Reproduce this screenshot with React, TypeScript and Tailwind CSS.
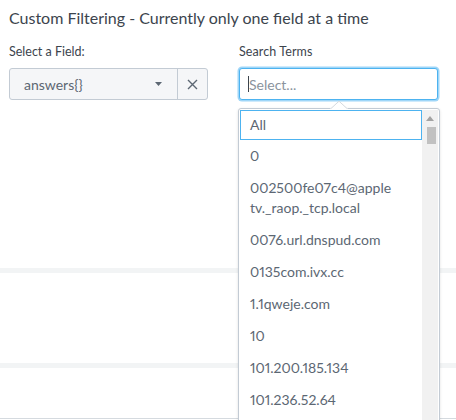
import React from "react";

const items: React.ReactNode[] = [
  "0",
  <>
    002500fe07c4@apple
    <br />
    tv._raop._tcp.local
  </>,
  "0076.url.dnspud.com",
  "0135com.ivx.cc",
  "1.1qweje.com",
  "10",
  "101.200.185.134",
  "101.236.52.64",
];

export default function App() {
  return (
    <div className="relative w-[456px] h-[420px] overflow-hidden bg-white font-['Lato',sans-serif] text-[#3c444d] proportional-nums">
      <div className="pt-[8px] pl-[9px] text-[16px] leading-[20px]">
        Custom Filtering - Currently only one field at a time
      </div>
      <div className="flex gap-[31px] pl-[9px] pt-[14px]">
        <div className="w-[199px]">
          <div className="text-[12.5px] leading-[20px]">Select a Field:</div>
          <div className="mt-[6px] flex h-[32px] rounded-[3px] border border-[#c3cbd4] bg-[#f5f6f8]">
            <div className="flex flex-1 items-center justify-between pl-[14px] pr-[15px] text-[14px] text-[#5c6773]">
              <span>answers{"{}"}</span>
              <svg width="7" height="4" viewBox="0 0 7 4">
                <path d="M0 0h7L3.5 4z" fill="#5c6773" />
              </svg>
            </div>
            <div className="flex w-[30px] items-center justify-center border-l border-[#c3cbd4]">
              <svg width="11" height="11" viewBox="0 0 11 11">
                <path d="M1 1l9 9M10 1l-9 9" stroke="#5c6773" strokeWidth="1.4" />
              </svg>
            </div>
          </div>
        </div>
        <div className="w-[199px]">
          <div className="text-[12.5px] leading-[20px] tracking-[0.1px]">Search Terms</div>
          <div className="mt-[6px] flex h-[32px] items-center rounded-[3px] border border-[#4db3f0] bg-white pl-[8px] shadow-[0_0_0_1.5px_#9fd6f8] text-[14px] text-[#8a939d]">
            <span className="h-[16px] w-px bg-[#3c444d]" />
            <span>Select...</span>
          </div>
        </div>
      </div>
      <div className="h-[168px]" />
      <div className="h-[5px] bg-[#f2f4f5]" />
      <div className="h-[90px]" />
      <div className="h-[5px] bg-[#f2f4f5]" />
      <div className="h-[50px]" />
      <div className="h-px bg-[#d5dadf]" />

      <div className="absolute left-[238px] top-[108px] flex h-[330px] w-[202px] rounded-[3px] border border-[#c3cbd4] bg-white p-px shadow-[0_1px_3px_rgba(0,0,0,0.12)]">
        <div className="flex-1 text-[14px] leading-[20px] text-[#5c6773]">
          <div className="border border-[#4db3f0] py-[4px] pl-[9px]">All</div>
          {items.map((it, i) => (
            <div key={i} className="py-[6px] pl-[10px]">
              {it}
            </div>
          ))}
        </div>
        <div className="flex w-[16px] flex-col bg-[#f1f1f1]">
          <div className="flex h-[17px] items-center justify-center">
            <svg width="8" height="5" viewBox="0 0 8 5">
              <path d="M4 0L8 5H0z" fill="#a3a3a3" />
            </svg>
          </div>
          <div className="ml-[5px] h-[17px] w-[9px] bg-[#c1c1c1]" />
        </div>
      </div>
      <svg
        className="absolute left-[330px] top-[100px]"
        width="18"
        height="10"
        viewBox="0 0 18 10"
      >
        <path d="M0 9L9 1l9 8z" fill="white" />
        <path d="M1 8.5L9 1.2l8 7.3" fill="none" stroke="#d5dadf" strokeWidth="1" />
      </svg>
    </div>
  );
}
